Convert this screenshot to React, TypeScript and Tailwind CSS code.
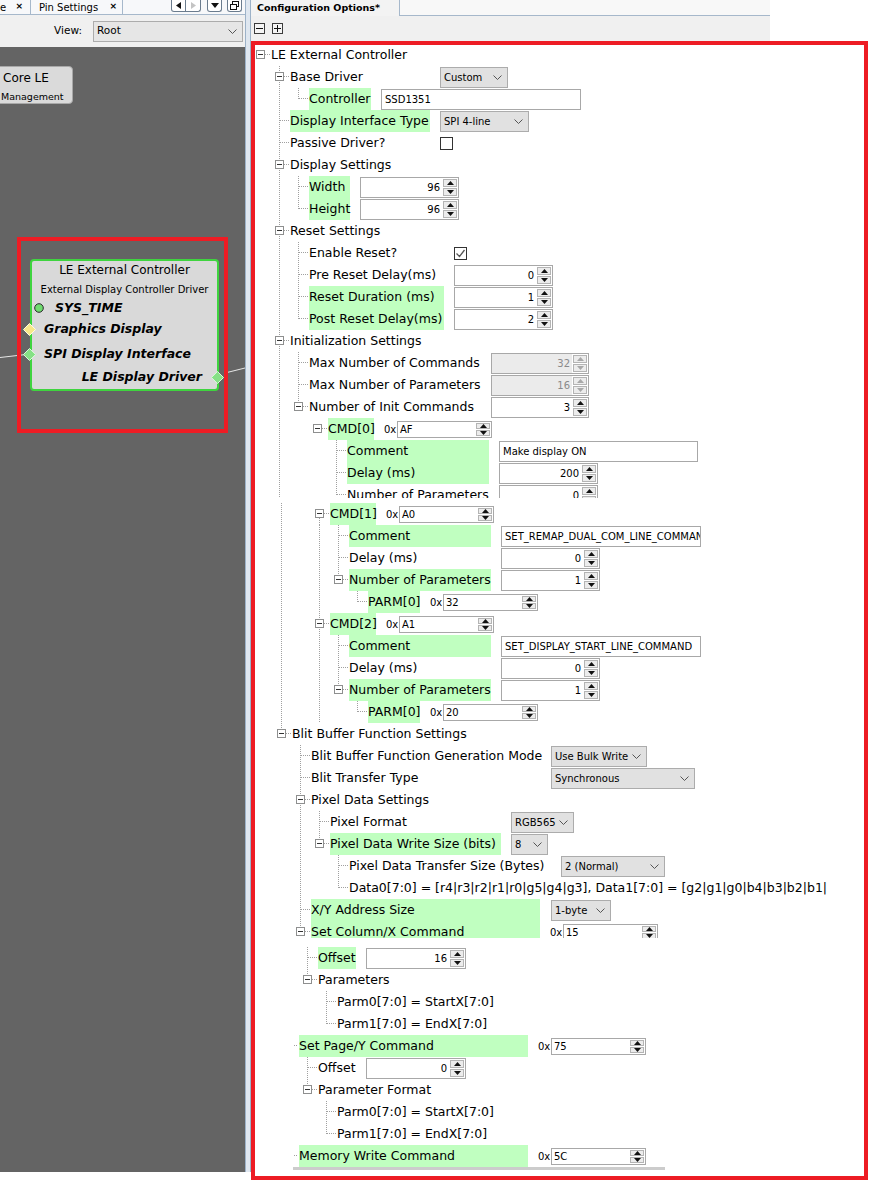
import React, { type ReactNode } from "react";

// page x where the tree rows begin (inside the red frame)
const X0 = 255;
const DOT = "#a0a0a0";

type RowProps = {
  L: number; // page x of the label
  t: string;
  lw?: string; // label cell width
  g?: boolean; // highlighted (changed) value
  w?: ReactNode;
  gap?: string;
  box?: boolean; // expander
  pg?: number; // parent guide x
  v?: number[]; // guides through the full row
  vt?: number[]; // guides that stop at the middle
  vb?: number[]; // guides that start under the expander
  cls?: string;
};

function Guides({ L, box, pg, v = [], vt = [], vb = [] }: RowProps) {
  const px = (x: number) => x - X0 + 0.5;
  const end = box ? L - 15 : L - 1;
  return (
    <svg width={L - X0} height={22} className="block shrink-0">
      {v.map((x) => (
        <line key={`v${x}`} x1={px(x)} x2={px(x)} y1={0} y2={22} stroke={DOT} strokeDasharray="1 1" />
      ))}
      {vt.map((x) => (
        <line key={`t${x}`} x1={px(x)} x2={px(x)} y1={0} y2={11} stroke={DOT} strokeDasharray="1 1" />
      ))}
      {vb.map((x) => (
        <line key={`b${x}`} x1={px(x)} x2={px(x)} y1={15} y2={22} stroke={DOT} strokeDasharray="1 1" />
      ))}
      {pg !== undefined && end > pg && (
        <line x1={pg - X0 + 1} x2={end - X0} y1={10.5} y2={10.5} stroke={DOT} strokeDasharray="1 1" />
      )}
      {box && (
        <g>
          <rect x={px(L - 15)} y={6.5} width={8} height={8} fill="#fff" stroke="#8e8f8f" />
          <line x1={L - 13 - X0} x2={L - 8 - X0} y1={10.5} y2={10.5} stroke="#333" />
          <line x1={L - 6 - X0} x2={L - 1 - X0} y1={10.5} y2={10.5} stroke={DOT} strokeDasharray="1 1" />
        </g>
      )}
    </svg>
  );
}

function Row(p: RowProps) {
  return (
    <div className={`flex h-[22px] items-center shrink-0 ${p.cls ?? ""}`}>
      <Guides {...p} />
      <div
        className={`${p.lw ?? ""} h-full flex items-center shrink-0 whitespace-nowrap ${
          p.g ? "bg-[#c0ffc0]" : ""
        }`}
      >
        {p.t}
      </div>
      {p.w && <div className={`${p.gap ?? "ml-[10px]"} flex items-center shrink-0`}>{p.w}</div>}
    </div>
  );
}

function Chevron() {
  return (
    <svg width="9" height="5" viewBox="0 0 9 5" className="shrink-0">
      <path d="M0.5 0.5 L4.5 4.5 L8.5 0.5" fill="none" stroke="#555" />
    </svg>
  );
}

function Combo({ w, t }: { w: string; t: string }) {
  return (
    <div
      className={`${w} h-[21px] border border-[#acacac] bg-[#e1e1e1] flex items-center justify-between pl-[3px] pr-[5px] text-[10px] whitespace-nowrap`}
    >
      <span>{t}</span>
      <Chevron />
    </div>
  );
}

function Txt({ w, t }: { w: string; t: string }) {
  return (
    <div
      className={`${w} h-[21px] border border-[#a8a8a8] bg-white flex items-center pl-[3px] text-[10px] overflow-hidden whitespace-nowrap`}
    >
      {t}
    </div>
  );
}

function Arrow({ up, dis }: { up?: boolean; dis?: boolean }) {
  return (
    <div className="flex-1 border border-[#b4b4b4] bg-[#ececec] flex items-center justify-center">
      <svg width="7" height="4" viewBox="0 0 7 4">
        <path d={up ? "M0 4 L3.5 0 L7 4 Z" : "M0 0 L3.5 4 L7 0 Z"} fill={dis ? "#a8a8a8" : "#111"} />
      </svg>
    </div>
  );
}

function Spin({ w, v, dis }: { w: string; v: string; dis?: boolean }) {
  return (
    <div
      className={`${w} h-[21px] border border-[#a8a8a8] flex ${
        dis ? "bg-[#ebebeb] text-[#8a8a8a]" : "bg-white"
      }`}
    >
      <div className="flex-1 flex items-center justify-end pr-[2px] text-[10px]">{v}</div>
      <div className="w-[16px] flex flex-col gap-px p-px bg-white">
        <Arrow up dis={dis} />
        <Arrow dis={dis} />
      </div>
    </div>
  );
}

function Hex({ v }: { v: string }) {
  return (
    <div className="flex items-center text-[10px]">
      <span className="w-[13px]">0x</span>
      <div className="w-[95px] h-[17px] border border-[#a8a8a8] bg-white flex">
        <div className="flex-1 pl-[2px] flex items-center">{v}</div>
        <div className="w-[16px] flex flex-col gap-px p-px">
          <Arrow up />
          <Arrow />
        </div>
      </div>
    </div>
  );
}

function Check({ on }: { on?: boolean }) {
  return (
    <div className="w-[13px] h-[13px] border border-[#333] bg-white flex items-center justify-center">
      {on && (
        <svg width="11" height="11" viewBox="0 0 11 11">
          <path d="M1.5 5.5 L4.5 8.5 L9.5 2" fill="none" stroke="#555" strokeWidth="1.3" />
        </svg>
      )}
    </div>
  );
}

function Diamond({ fill, edge, cls }: { fill: string; edge: string; cls: string }) {
  return (
    <svg width="13" height="13" viewBox="0 0 13 13" className={`absolute top-1/2 -mt-[6.5px] ${cls}`}>
      <polygon points="6.5,0.5 12.5,6.5 6.5,12.5 0.5,6.5" fill={fill} stroke={edge} />
    </svg>
  );
}

function NavBtn({ children, cls = "" }: { children: ReactNode; cls?: string }) {
  return (
    <div
      className={`w-[15px] h-[12px] border border-t-0 border-[#6b7c8e] bg-white flex items-center justify-center ${cls}`}
    >
      {children}
    </div>
  );
}

function LeftPane() {
  return (
    <div className="w-[245px] flex flex-col shrink-0">
      {/* tab strip, cut at the top */}
      <div className="h-[15px] flex items-start bg-[#f7f8fa] border-b border-[#a6b8cb] text-[10px]">
        <div className="w-[31px] h-[14px] border-r border-[#a6b8cb] flex items-center justify-between pr-[7px]">
          <span>e</span>
          <span className="font-bold text-[9px]">×</span>
        </div>
        <div className="w-[92px] h-[14px] border-r border-[#a6b8cb] flex items-center justify-between pl-[8px] pr-[5px]">
          <span>Pin Settings</span>
          <span className="font-bold text-[9px]">×</span>
        </div>
        <div className="ml-auto mr-[3px] flex items-start">
          <NavBtn cls="rounded-bl-[3px]">
            <svg width="5" height="7" viewBox="0 0 5 7">
              <path d="M5 0 L0 3.5 L5 7 Z" fill="#111" />
            </svg>
          </NavBtn>
          <NavBtn cls="rounded-br-[3px] border-l-0">
            <svg width="5" height="7" viewBox="0 0 5 7">
              <path d="M0 0 L5 3.5 L0 7 Z" fill="#c4c4c4" />
            </svg>
          </NavBtn>
          <NavBtn cls="ml-[6px] rounded-b-[3px]">
            <svg width="8" height="5" viewBox="0 0 8 5">
              <path d="M0 0 L8 0 L4 5 Z" fill="#111" />
            </svg>
          </NavBtn>
          <NavBtn cls="ml-[5px] rounded-b-[3px]">
            <svg width="9" height="9" viewBox="0 0 9 9">
              <rect x="2.5" y="0.5" width="6" height="5" fill="none" stroke="#111" />
              <rect x="0.5" y="3.5" width="6" height="5" fill="#fff" stroke="#111" />
            </svg>
          </NavBtn>
        </div>
      </div>
      {/* view selector */}
      <div className="h-[32px] bg-[#f0f0f0] flex items-center justify-end pr-[2px] gap-[11px] text-[10.5px]">
        <span>View:</span>
        <div className="w-[150px] h-[21px] border border-[#acacac] bg-[#e6e6e6] flex items-center justify-between pl-[3px] pr-[5px]">
          <span>Root</span>
          <Chevron />
        </div>
      </div>
      {/* component graph */}
      <div className="h-[1125px] bg-[#646464] relative overflow-hidden">
        <svg className="absolute left-0 top-0" width="245" height="400">
          <line x1="0" y1="310.5" x2="26" y2="307.5" stroke="#e6e6e6" />
          <line x1="225" y1="326" x2="245" y2="321" stroke="#e6e6e6" />
        </svg>

        <div className="absolute left-[-8px] top-[19px] w-[81px] h-[38px] rounded-[4px] border border-[#a8a8a8] bg-[#dadada] flex flex-col">
          <span className="ml-[10px] mt-[4px] text-[12px] leading-[15px]">Core LE</span>
          <span className="ml-[8px] mt-[5px] text-[9.5px] leading-[12px]">Management</span>
        </div>

        <div className="absolute left-[17px] top-[190px] w-[211px] h-[196px] border-4 border-[#ed1c24]" />

        <div className="absolute left-[30px] top-[212px] w-[189px] h-[132px] rounded-[4px] border-2 border-[#3fd43f] bg-[#d9d9d9] flex flex-col">
          <div className="h-[17px] flex items-center justify-center text-[12px]">LE External Controller</div>
          <div className="h-[23px] flex items-center justify-center text-[10px]">
            External Display Controller Driver
          </div>
          <div className="h-[14px] relative flex items-center pl-[23px] font-bold italic text-[12.5px]">
            <svg width="10" height="10" viewBox="0 0 10 10" className="absolute left-[2px] top-1/2 -mt-[5px]">
              <circle cx="5" cy="5" r="4.3" fill="#6fdc6f" stroke="#2a2a2a" />
            </svg>
            SYS_TIME
          </div>
          <div className="h-[28px] relative flex items-center pl-[12px] font-bold italic text-[12.5px]">
            <Diamond fill="#f7e88a" edge="#fffbe0" cls="left-[-9px]" />
            Graphics Display
          </div>
          <div className="h-[22px] relative flex items-center pl-[12px] font-bold italic text-[12.5px]">
            <Diamond fill="#86e086" edge="#d8f8d8" cls="left-[-9px]" />
            SPI Display Interface
          </div>
          <div className="h-[24px] relative flex items-center justify-end pr-[15px] font-bold italic text-[12.5px]">
            LE Display Driver
            <Diamond fill="#86e086" edge="#d8f8d8" cls="right-[-7px]" />
          </div>
        </div>
      </div>
    </div>
  );
}

function ToolBtn({ plus }: { plus?: boolean }) {
  return (
    <div className="w-[11px] h-[11px] border border-[#3c3c3c] bg-[#f5f5f5] flex items-center justify-center">
      <svg width="7" height="7" viewBox="0 0 7 7">
        <line x1="0" y1="3.5" x2="7" y2="3.5" stroke="#111" />
        {plus && <line x1="3.5" y1="0" x2="3.5" y2="7" stroke="#111" />}
      </svg>
    </div>
  );
}

function ConfigPane() {
  return (
    <div className="w-[629px] flex flex-col shrink-0">
      <div className="h-[16px] flex">
        <div className="w-[149px] h-full bg-[#f3f3f3] border-r border-[#a6b8cb] flex items-center pl-[6px] text-[9.5px] font-bold whitespace-nowrap">
          Configuration Options*
        </div>
        <div className="w-[370px] h-full bg-[#f8f8f8] border-b border-[#a6b8cb]" />
      </div>
      <div className="h-[25px] w-[519px] bg-[#f0f0f0] flex items-center gap-[7px] pl-[3px]">
        <ToolBtn />
        <ToolBtn plus />
      </div>

      <div className="w-[617px] h-[1139px] border-4 border-[#ed1c24] bg-white overflow-hidden flex flex-col text-[12.5px]">
        <Row cls="-mt-[1px]" L={271} box t="LE External Controller" />
        <Row L={290} box pg={279} v={[279]} t="Base Driver" lw="w-[140px]" w={<Combo w="w-[68px]" t="Custom" />} />
        <Row L={309} pg={298} v={[279]} vt={[298]} t="Controller" g lw="w-[62px]" w={<Txt w="w-[200px]" t="SSD1351" />} />
        <Row L={290} pg={279} v={[279]} t="Display Interface Type" g lw="w-[140px]" w={<Combo w="w-[89px]" t="SPI 4-line" />} />
        <Row L={290} pg={279} v={[279]} t="Passive Driver?" lw="w-[140px]" w={<Check />} />
        <Row L={290} box pg={279} v={[279]} t="Display Settings" />
        <Row L={309} pg={298} v={[279, 298]} t="Width" g lw="w-[41px]" w={<Spin w="w-[99px]" v="96" />} />
        <Row L={309} pg={298} v={[279]} vt={[298]} t="Height" g lw="w-[41px]" w={<Spin w="w-[99px]" v="96" />} />
        <Row L={290} box pg={279} v={[279]} t="Reset Settings" />
        <Row L={309} pg={298} v={[279, 298]} t="Enable Reset?" lw="w-[135px]" w={<Check on />} />
        <Row L={309} pg={298} v={[279, 298]} t="Pre Reset Delay(ms)" lw="w-[135px]" w={<Spin w="w-[99px]" v="0" />} />
        <Row L={309} pg={298} v={[279, 298]} t="Reset Duration (ms)" g lw="w-[135px]" w={<Spin w="w-[99px]" v="1" />} />
        <Row L={309} pg={298} v={[279]} vt={[298]} t="Post Reset Delay(ms)" g lw="w-[135px]" w={<Spin w="w-[99px]" v="2" />} />
        <Row L={290} box pg={279} v={[279]} t="Initialization Settings" />
        <Row L={309} pg={298} v={[279, 298]} t="Max Number of Commands" lw="w-[172px]" w={<Spin w="w-[98px]" v="32" dis />} />
        <Row L={309} pg={298} v={[279, 298]} t="Max Number of Parameters" lw="w-[172px]" w={<Spin w="w-[98px]" v="16" dis />} />
        <Row L={309} box pg={298} v={[279]} vt={[298]} t="Number of Init Commands" lw="w-[172px]" w={<Spin w="w-[98px]" v="3" />} />

        {/* CMD[0] panel is clipped by its own scroll area */}
        <div className="h-[80px] overflow-hidden shrink-0">
          <Row L={328} box v={[279]} t="CMD[0]" g lw="w-[46px]" w={<Hex v="AF" />} />
          <Row L={347} pg={336} v={[279, 336]} t="Comment" g lw="w-[142px]" w={<Txt w="w-[199px]" t="Make display ON" />} />
          <Row L={347} pg={336} v={[279, 336]} t="Delay (ms)" g lw="w-[142px]" w={<Spin w="w-[99px]" v="200" />} />
          <Row L={347} pg={336} v={[279]} vt={[336]} t="Number of Parameters" lw="w-[142px]" w={<Spin w="w-[99px]" v="0" />} />
        </div>

        <Row cls="mt-[5px]" L={330} box v={[281]} vb={[319]} t="CMD[1]" g lw="w-[46px]" w={<Hex v="A0" />} />
        <Row L={349} pg={338} v={[281, 319, 338]} t="Comment" g lw="w-[142px]" w={<Txt w="w-[200px]" t="SET_REMAP_DUAL_COM_LINE_COMMAND" />} />
        <Row L={349} pg={338} v={[281, 319, 338]} t="Delay (ms)" lw="w-[142px]" w={<Spin w="w-[99px]" v="0" />} />
        <Row L={349} box pg={338} v={[281, 319]} vt={[338]} t="Number of Parameters" g lw="w-[142px]" w={<Spin w="w-[99px]" v="1" />} />
        <Row L={368} pg={357} v={[281, 319]} vt={[357]} t="PARM[0]" g lw="w-[52px]" w={<Hex v="32" />} />

        <Row L={330} box v={[281, 319]} t="CMD[2]" g lw="w-[46px]" w={<Hex v="A1" />} />
        <Row L={349} pg={338} v={[281, 319, 338]} t="Comment" g lw="w-[142px]" w={<Txt w="w-[200px]" t="SET_DISPLAY_START_LINE_COMMAND" />} />
        <Row L={349} pg={338} v={[281, 319, 338]} t="Delay (ms)" lw="w-[142px]" w={<Spin w="w-[99px]" v="0" />} />
        <Row L={349} box pg={338} v={[281, 319]} vt={[338]} t="Number of Parameters" g lw="w-[142px]" w={<Spin w="w-[99px]" v="1" />} />
        <Row L={368} pg={357} v={[281, 319]} vt={[357]} t="PARM[0]" g lw="w-[52px]" w={<Hex v="20" />} />

        <Row L={292} box vt={[281]} t="Blit Buffer Function Settings" />
        <Row L={311} pg={300} v={[300]} t="Blit Buffer Function Generation Mode" lw="w-[230px]" w={<Combo w="w-[96px]" t="Use Bulk Write" />} />
        <Row L={311} pg={300} v={[300]} t="Blit Transfer Type" lw="w-[230px]" w={<Combo w="w-[144px]" t="Synchronous" />} />
        <Row L={311} box pg={300} v={[300]} t="Pixel Data Settings" />
        <Row L={330} pg={319} v={[300, 319]} t="Pixel Format" lw="w-[171px]" w={<Combo w="w-[63px]" t="RGB565" />} />
        <Row L={330} box pg={319} v={[300]} vt={[319]} t="Pixel Data Write Size (bits)" g lw="w-[171px]" w={<Combo w="w-[37px]" t="8" />} />
        <Row L={349} pg={338} v={[300, 338]} t="Pixel Data Transfer Size (Bytes)" lw="w-[202px]" w={<Combo w="w-[104px]" t="2 (Normal)" />} />
        <Row L={349} pg={338} v={[300]} vt={[338]} t="Data0[7:0] = [r4|r3|r2|r1|r0|g5|g4|g3], Data1[7:0] = [g2|g1|g0|b4|b3|b2|b1|" />
        <Row L={311} pg={300} v={[300]} t="X/Y Address Size" g lw="w-[229px]" gap="ml-[11px]" w={<Combo w="w-[60px]" t="1-byte" />} />
        <div className="h-[17px] overflow-hidden shrink-0">
          <Row L={311} box pg={300} vt={[300]} t="Set Column/X Command" g lw="w-[229px]" w={<Hex v="15" />} />
        </div>
        <Row cls="mt-[9px]" L={318} pg={307} v={[307]} t="Offset" g lw="w-[38px]" w={<Spin w="w-[100px]" v="16" />} />
        <Row L={318} box pg={307} vt={[307]} t="Parameters" />
        <Row L={337} pg={326} v={[326]} t="Parm0[7:0] = StartX[7:0]" />
        <Row L={337} pg={326} vt={[326]} t="Parm1[7:0] = EndX[7:0]" />
        <Row L={299} pg={293} t="Set Page/Y Command" g lw="w-[229px]" w={<Hex v="75" />} />
        <Row L={318} pg={307} v={[307]} t="Offset" lw="w-[38px]" w={<Spin w="w-[100px]" v="0" />} />
        <Row L={318} box pg={307} vt={[307]} t="Parameter Format" />
        <Row L={337} pg={326} v={[326]} t="Parm0[7:0] = StartX[7:0]" />
        <Row L={337} pg={326} vt={[326]} t="Parm1[7:0] = EndX[7:0]" />
        <Row L={299} pg={293} t="Memory Write Command" g lw="w-[229px]" w={<Hex v="5C" />} />
        <div className="ml-[38px] w-[372px] h-[3px] bg-[#cccccc] shrink-0" />
      </div>
    </div>
  );
}

export default function App() {
  return (
    <div className="w-[880px] h-[1190px] bg-white flex items-start overflow-hidden font-['DejaVu_Sans',sans-serif] text-black">
      <LeftPane />
      <div className="w-[6px] h-[1172px] shrink-0 bg-[#dfe7f0] border-x border-[#9db2c8]" />
      <ConfigPane />
    </div>
  );
}
